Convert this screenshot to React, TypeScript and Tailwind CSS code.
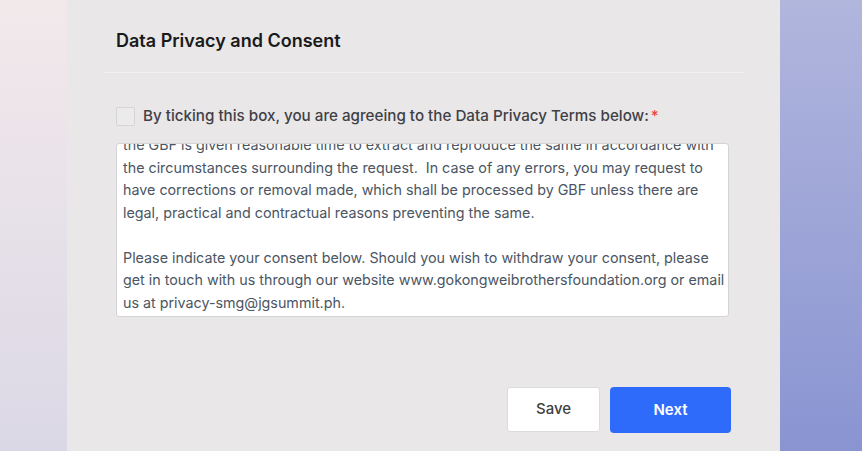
import { useState } from 'react';

const terms = [
  'access to a copy of your personal data held by GBF, which shall be granted provided that',
  'the GBF is given reasonable time to extract and reproduce the same in accordance with',
  'the circumstances surrounding the request.  In case of any errors, you may request to',
  'have corrections or removal made, which shall be processed by GBF unless there are',
  'legal, practical and contractual reasons preventing the same.',
  '',
  'Please indicate your consent below. Should you wish to withdraw your consent, please',
  'get in touch with us through our website www.gokongweibrothersfoundation.org or email',
  'us at privacy-smg@jgsummit.ph.',
];

export default function App() {
  const [agreed, setAgreed] = useState(false);

  return (
    <div className="flex min-h-[451px] w-full font-['Inter',sans-serif]">
      <div className="w-[67px] shrink-0 bg-gradient-to-b from-[#f2e9eb] to-[#dbd8e6]" />

      <div className="flex w-[713px] shrink-0 flex-col bg-[#e9e7e8] px-9 pt-[27px]">
        <div className="border-b border-[#f1eff0] px-[13px] pb-[18px]">
          <h2 className="text-[18px] leading-[27px] font-semibold text-[#1a1a1a]">Data Privacy and Consent</h2>
        </div>

        <div className="px-[13px]">
          <label className="mt-[32px] flex items-center gap-2 cursor-pointer">
            <input
              type="checkbox"
              checked={agreed}
              onChange={(e) => setAgreed(e.target.checked)}
              className="h-[19px] w-[19px] appearance-none rounded-[2px] border border-[#d6d4d5] bg-[#ecebec] checked:bg-[#2f6bfb]"
            />
            <span className="text-[15.2px] leading-[22px] font-medium text-[#3f3f46]">
              By ticking this box, you are agreeing to the Data Privacy Terms below:
              <span className="ml-0.5 text-[#ef4444]">*</span>
            </span>
          </label>

          <div className="mt-[16px] flex h-[174px] w-[613px] flex-col justify-end overflow-hidden rounded-[3px] border border-[#d4d4d8] bg-white pb-[2px] pl-[6px] text-[14.3px] leading-[22.5px] text-[#4b5563]">
            {terms.map((line, i) => (
              <div key={i} className="h-[22.5px] shrink-0 whitespace-pre">
                {line}
              </div>
            ))}
          </div>

          <div className="mt-[70px] flex w-[615px] justify-end gap-[10px]">
            <button className="h-[45px] w-[93px] rounded-[3px] border border-[#dcdcdc] bg-white text-[15px] font-medium text-[#404040]">
              Save
            </button>
            <button className="h-[46px] w-[121px] rounded-[4px] bg-[#2f6bfb] text-[15px] font-semibold text-white">
              Next
            </button>
          </div>
        </div>
      </div>

      <div className="flex-1 bg-gradient-to-b from-[#b1b6dd] to-[#8a94d1]" />
    </div>
  );
}
